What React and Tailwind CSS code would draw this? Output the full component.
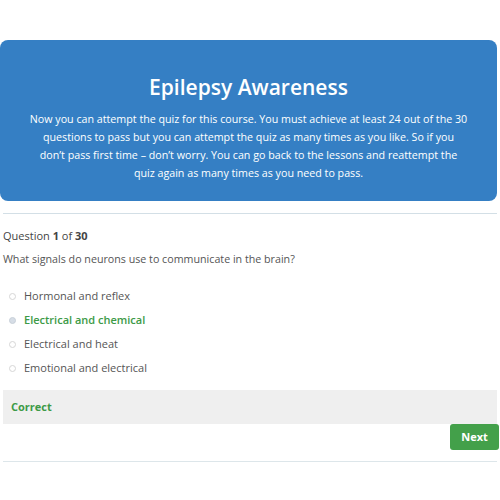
const OPTIONS = [
  { label: "Hormonal and reflex" },
  { label: "Electrical and chemical", selected: true },
  { label: "Electrical and heat" },
  { label: "Emotional and electrical" },
];

const INTRO = [
  "Now you can attempt the quiz for this course. You must achieve at least 24 out of the 30",
  "questions to pass but you can attempt the quiz as many times as you like. So if you",
  "don’t pass first time – don’t worry. You can go back to the lessons and reattempt the",
  "quiz again as many times as you need to pass.",
];

export default function App() {
  return (
    <div
      className="w-[500px] h-[500px] bg-white text-[#444] overflow-hidden"
      style={{ fontFamily: '"Open Sans", "Noto Sans", sans-serif' }}
    >
      <div className="pt-[40px] pr-[3px]">
        {/* banner */}
        <div className="bg-[#357fc4] rounded-[8px] h-[161px] flex flex-col items-center pt-[31px] text-white">
          <h1 className="text-[21px] leading-[32px] font-semibold">Epilepsy Awareness</h1>
          <div className="mt-[7px] text-[10.7px] leading-[18px] text-center">
            {INTRO.map((line) => (
              <p key={line} className="whitespace-nowrap">
                {line}
              </p>
            ))}
          </div>
        </div>
      </div>

      <div className="px-[3px]">
        <div className="mt-[12px] border-t border-[#d3dfe6]" />

        <p className="mt-[13px] text-[11px] leading-[18px]">
          Question <b>1</b> of <b>30</b>
        </p>
        <p className="mt-[5px] text-[10.7px] leading-[18px] text-[#555]">
          What signals do neurons use to communicate in the brain?
        </p>

        {/* options */}
        <ul className="mt-[19px] flex flex-col gap-[6px] pl-[6px]">
          {OPTIONS.map((o) => (
            <li key={o.label} className="flex items-center gap-[8px] h-[18px]">
              <span
                className={`w-[7px] h-[7px] rounded-full border ${
                  o.selected ? "border-[#c8d0d8] bg-[#d6dde6]" : "border-[#d6d6d6] bg-white"
                }`}
              />
              <span
                className={`text-[11px] ${
                  o.selected ? "text-[#3d9a47] font-semibold" : "text-[#555]"
                }`}
              >
                {o.label}
              </span>
            </li>
          ))}
        </ul>

        {/* feedback */}
        <div className="mt-[13px] h-[34px] bg-[#efefef] flex items-center pl-[8px]">
          <span className="text-[11px] font-bold text-[#3d9a47]">Correct</span>
        </div>

        <div className="flex justify-end">
          <button className="w-[49px] h-[26px] mr-[-2px] rounded-[3px] bg-[#43a04a] text-white text-[11px] font-bold">
            Next
          </button>
        </div>

        <div className="mt-[11px] border-t border-[#dde6ea]" />
      </div>
    </div>
  );
}
